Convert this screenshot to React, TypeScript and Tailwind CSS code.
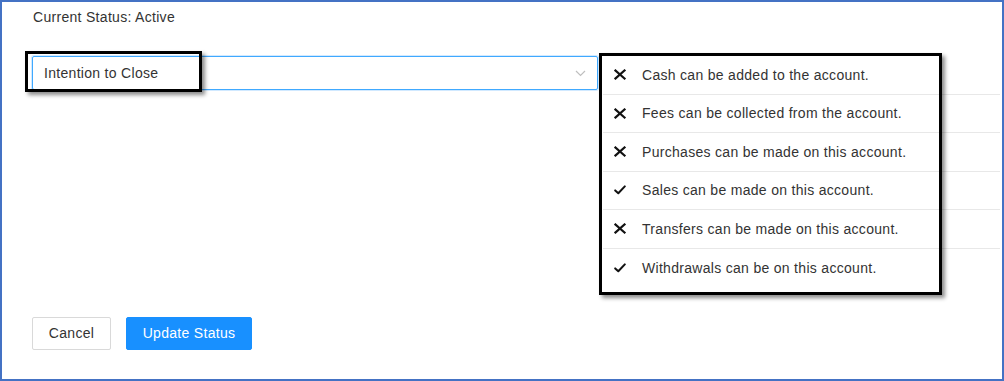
import React from "react";

const rules = [
  { text: "Cash can be added to the account.", ok: false },
  { text: "Fees can be collected from the account.", ok: false },
  { text: "Purchases can be made on this account.", ok: false },
  { text: "Sales can be made on this account.", ok: true },
  { text: "Transfers can be made on this account.", ok: false },
  { text: "Withdrawals can be on this account.", ok: true },
];

function CrossIcon() {
  return (
    <svg width="12" height="11" viewBox="0 0 12 11" fill="none" stroke="#111" strokeWidth="2.2" strokeLinecap="square">
      <path d="M1.5 1.5L10.5 9.5M10.5 1.5L1.5 9.5" />
    </svg>
  );
}

function CheckIcon() {
  return (
    <svg width="12" height="10" viewBox="0 0 12 10" fill="none" stroke="#111" strokeWidth="2" strokeLinecap="round" strokeLinejoin="round">
      <path d="M1.2 5.4L4.3 8.3L10.8 1.4" />
    </svg>
  );
}

export default function App() {
  return (
    <div className="relative w-[1004px] h-[381px] border-2 border-[#4472c4] bg-white text-[14px] tracking-[0.3px] text-[#333] font-['Liberation_Sans',Arial,sans-serif]">
      {/* Status */}
      <div className="pl-[31px] pt-[4px] leading-[22px]">Current Status: Active</div>

      {/* Select + permission list */}
      <div className="mt-[28px] flex items-start">
        <div className="ml-[30px] w-[566px] h-[34px] flex items-center justify-between pl-[11px] pr-[11px] border border-[#40a9ff] rounded-[2px] shadow-[0_0_0_1px_rgba(24,144,255,0.2)]">
          <span className="leading-[22px]">Intention to Close</span>
          <svg width="11" height="7" viewBox="0 0 11 7" fill="none" stroke="#bfbfbf" strokeWidth="1.2">
            <path d="M1 1L5.5 5.5L10 1" />
          </svg>
        </div>

        <ul className="ml-[5px] mr-[2px] flex-1">
          {rules.map((r, i) => (
            <li
              key={r.text}
              className={`h-[38.5px] flex items-center pl-[11px] ${
                i < rules.length - 1 ? "border-b border-[#e8e8e8]" : ""
              }`}
            >
              <span className="w-[28px] flex items-center">{r.ok ? <CheckIcon /> : <CrossIcon />}</span>
              <span className="leading-[22px]">{r.text}</span>
            </li>
          ))}
        </ul>
      </div>

      {/* Actions */}
      <div className="mt-[30px] ml-[30px] flex gap-[15px]">
        <button className="w-[79px] h-[33px] bg-white border border-[#d9d9d9] rounded-[2px] text-[#333]">Cancel</button>
        <button className="w-[126px] h-[33px] bg-[#1890ff] border border-[#1890ff] rounded-[2px] text-white">Update Status</button>
      </div>

      {/* Callout boxes */}
      <div className="absolute left-[23px] top-[49px] w-[177px] h-[41px] border-[3px] border-black shadow-[3px_3px_4px_rgba(0,0,0,0.45)] pointer-events-none" />
      <div className="absolute left-[597px] top-[51px] w-[343px] h-[242px] border-[3px] border-black shadow-[3px_3px_4px_rgba(0,0,0,0.45)] pointer-events-none" />
    </div>
  );
}
